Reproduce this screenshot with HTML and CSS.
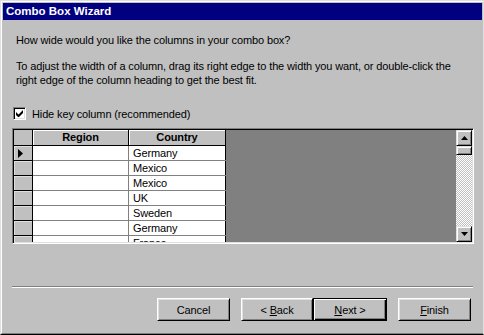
FILE: index.html
```html
<!DOCTYPE html>
<html>
<head>
<meta charset="utf-8">
<link rel="stylesheet" href="styles.css">
</head>
<body>
<div class="window">
  <div class="frame">
    <div class="titlebar">Combo Box Wizard</div>
    <div class="content">
      <p class="q">How wide would you like the columns in your combo box?</p>
      <p class="help">To adjust the width of a column, drag its right edge to the width you want, or double-click the<br>right edge of the column heading to get the best fit.</p>
      <div class="check">
        <span class="box"><svg width="7" height="7" viewBox="0 0 7 7"><path d="M0 2v3l2 2h1l4-4V0L2.5 4.5z" fill="#000"/></svg></span>
        <span class="label">Hide key column (recommended)</span>
      </div>
      <div class="grid">
        <div class="sheet">
          <div class="row head">
            <div class="sel"></div>
            <div class="cell region">Region</div>
            <div class="cell country">Country</div>
          </div>
          <div class="row">
            <div class="sel"><svg width="5" height="9" viewBox="0 0 5 9"><path d="M0 0L5 4.5L0 9z" fill="#000"/></svg></div>
            <div class="cell region"></div>
            <div class="cell country">Germany</div>
          </div>
          <div class="row"><div class="sel"></div><div class="cell region"></div><div class="cell country">Mexico</div></div>
          <div class="row"><div class="sel"></div><div class="cell region"></div><div class="cell country">Mexico</div></div>
          <div class="row"><div class="sel"></div><div class="cell region"></div><div class="cell country">UK</div></div>
          <div class="row"><div class="sel"></div><div class="cell region"></div><div class="cell country">Sweden</div></div>
          <div class="row"><div class="sel"></div><div class="cell region"></div><div class="cell country">Germany</div></div>
          <div class="row"><div class="sel"></div><div class="cell region"></div><div class="cell country">France</div></div>
        </div>
        <div class="empty"></div>
        <div class="scroll">
          <div class="sbtn"><svg width="7" height="4" viewBox="0 0 7 4"><path d="M3.5 0L7 4H0z" fill="#000"/></svg></div>
          <div class="thumb"></div>
          <div class="track"></div>
          <div class="sbtn"><svg width="7" height="4" viewBox="0 0 7 4"><path d="M0 0H7L3.5 4z" fill="#000"/></svg></div>
        </div>
      </div>
      <div class="sep"></div>
      <div class="buttons">
        <div class="btn cancel"><span>Cancel</span></div>
        <div class="btn back"><span>&lt; <u>B</u>ack</span></div>
        <div class="btn next default"><span><u>N</u>ext &gt;</span></div>
        <div class="btn finish"><span><u>F</u>inish</span></div>
      </div>
    </div>
  </div>
</div>
</body>
</html>
```

FILE: styles.css
```css
html, body {
  margin: 0;
  padding: 0;
  background: #c0c0c0;
}
body {
  font-family: "Liberation Sans", Arial, sans-serif;
  font-size: 11px;
  letter-spacing: -0.13px;
  color: #000;
}
.window {
  width: 484px;
  height: 335px;
  box-sizing: border-box;
  background: #c0c0c0;
  border-top: 1px solid #dfdfdf;
  border-left: 1px solid #dfdfdf;
  border-right: 1px solid #dfdfdf;
  border-bottom: 1px solid #000;
}
.frame {
  height: 100%;
  box-sizing: border-box;
  border-top: 1px solid #fff;
  border-left: 1px solid #fff;
  border-bottom: 1px solid #808080;
  padding: 1px 0 0 1px;
  display: flex;
  flex-direction: column;
}
.titlebar {
  height: 17px;
  background: #000080;
  color: #fff;
  font-weight: bold;
  font-size: 11.5px;
  letter-spacing: 0;
  line-height: 17px;
  padding-left: 3px;
  margin-right: 1px;
}
.content {
  padding: 13px 0 0 9px;
}
.q, .help {
  margin: 0;
  padding-left: 4px;
  line-height: 14px;
  white-space: nowrap;
}
.help {
  margin-top: 12px;
}
.check {
  margin-top: 20px;
  display: flex;
  align-items: center;
  height: 13px;
  padding-left: 1px;
}
.box {
  width: 13px;
  height: 13px;
  box-sizing: border-box;
  background: #fff;
  border-top: 1px solid #808080;
  border-left: 1px solid #808080;
  border-right: 1px solid #fff;
  border-bottom: 1px solid #fff;
  box-shadow: inset 1px 1px #000, inset -1px -1px #dfdfdf;
  display: flex;
  align-items: center;
  justify-content: center;
}
.label {
  margin-left: 6px;
}
.grid {
  margin-top: 8px;
  width: 462px;
  height: 116px;
  box-sizing: border-box;
  border-top: 1px solid #808080;
  border-left: 1px solid #808080;
  border-right: 1px solid #fff;
  border-bottom: 1px solid #fff;
  box-shadow: inset 1px 1px #000, inset -1px -1px #dfdfdf;
  padding: 1px;
  display: flex;
}
.sheet {
  width: 212px;
  height: 112px;
  overflow: hidden;
  background: #fff;
}
.row {
  display: flex;
  height: 15px;
  box-sizing: border-box;
  border-bottom: 1px solid #808080;
}
.row.head {
  height: 16px;
  border-bottom: 1px solid #000;
  background: #c0c0c0;
}
.sel {
  width: 19px;
  box-sizing: border-box;
  background: #c0c0c0;
  border-right: 1px solid #000;
  display: flex;
  align-items: center;
  padding-left: 4px;
}
.row:not(.head) .sel {
  border-bottom: 1px solid #000;
  margin-bottom: -1px;
  box-shadow: inset 1px 1px #dfdfdf;
}
.cell {
  box-sizing: border-box;
  border-right: 1px solid #808080;
  line-height: 14px;
  white-space: nowrap;
  overflow: hidden;
}
.region {
  width: 96px;
}
.country {
  width: 97px;
  padding-left: 4px;
  border-right-color: #000;
}
.head .cell {
  font-weight: bold;
  text-align: center;
  padding-left: 0;
  line-height: 15px;
  border-right-color: #000;
  box-shadow: inset 1px 1px #fff;
}
.empty {
  width: 230px;
  height: 112px;
  background: #808080;
}
.scroll {
  width: 16px;
  height: 112px;
  display: flex;
  flex-direction: column;
}
.sbtn, .thumb {
  box-sizing: border-box;
  background: #c0c0c0;
  border-top: 1px solid #dfdfdf;
  border-left: 1px solid #dfdfdf;
  border-right: 1px solid #000;
  border-bottom: 1px solid #000;
  box-shadow: inset 1px 1px #fff, inset -1px -1px #808080;
}
.sbtn {
  height: 16px;
  display: flex;
  align-items: center;
  justify-content: center;
}
.thumb {
  height: 9px;
}
.track {
  flex: 1;
  background: repeating-conic-gradient(#fff 0 25%, #c0c0c0 0 50%) 0 0 / 2px 2px;
}
.sep {
  margin-top: 42px;
  width: 461px;
  height: 1px;
  background: #808080;
  border-bottom: 1px solid #fff;
}
.buttons {
  margin-top: 10px;
  display: flex;
  padding-left: 145px;
}
.btn {
  height: 23px;
  box-sizing: border-box;
  background: #c0c0c0;
  border-top: 1px solid #fff;
  border-left: 1px solid #fff;
  border-right: 1px solid #000;
  border-bottom: 1px solid #000;
  box-shadow: inset 1px 1px #dfdfdf, inset -1px -1px #808080;
  display: flex;
  align-items: center;
  justify-content: center;
  line-height: 14px;
  white-space: pre;
}
.cancel {
  width: 73px;
}
.back {
  width: 72px;
  margin-left: 11px;
}
.next {
  width: 74px;
}
.default {
  border: 1px solid #000;
  box-shadow: inset 1px 1px #fff, inset -1px -1px #000, inset -2px -2px #808080;
}
.finish {
  width: 73px;
  margin-left: 11px;
}
u {
  text-decoration: underline;
  text-underline-offset: 1px;
}
```
